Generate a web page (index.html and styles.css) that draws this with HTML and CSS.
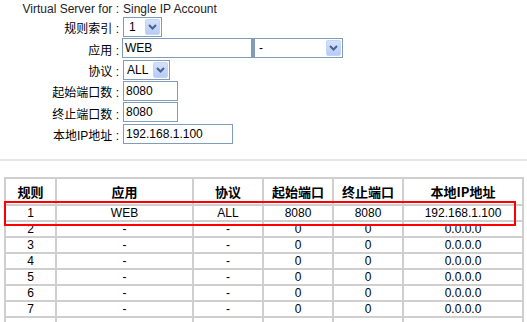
FILE: index.html
```html
<!DOCTYPE html>
<html lang="zh-CN">
  <head>
    <meta charset="UTF-8" />
    <title>Virtual Server</title>
    <link rel="stylesheet" href="styles.css">
  </head>
  <body>
    <div class="form">
      <div class="lbl">Virtual Server for :</div>
      <div class="val">Single IP Account</div>

      <div class="lbl">规则索引 :</div>
      <div class="val">
        <div class="sel sel-idx"><span>1</span><i class="arrow"><svg width="11" height="8" viewBox="0 0 11 8"><polyline points="2,2 5.5,5.5 9,2" fill="none" stroke="#4d6185" stroke-width="2"/></svg></i></div>
      </div>

      <div class="lbl">应用 :</div>
      <div class="val">
        <div class="box box-app">WEB</div><div class="sel sel-app"><span>-</span><i class="arrow"><svg width="11" height="8" viewBox="0 0 11 8"><polyline points="2,2 5.5,5.5 9,2" fill="none" stroke="#4d6185" stroke-width="2"/></svg></i></div>
      </div>

      <div class="lbl">协议 :</div>
      <div class="val">
        <div class="sel sel-proto"><span>ALL</span><i class="arrow"><svg width="11" height="8" viewBox="0 0 11 8"><polyline points="2,2 5.5,5.5 9,2" fill="none" stroke="#4d6185" stroke-width="2"/></svg></i></div>
      </div>

      <div class="lbl">起始端口数 :</div>
      <div class="val"><div class="box box-port">8080</div></div>

      <div class="lbl">终止端口数 :</div>
      <div class="val"><div class="box box-port">8080</div></div>

      <div class="lbl">本地IP地址 :</div>
      <div class="val"><div class="box box-ip">192.168.1.100</div></div>
    </div>

    <div class="sep"></div>

    <div class="list">
      <table class="rules">
        <tr>
          <th class="c1">规则</th><th class="c2">应用</th><th class="c3">协议</th>
          <th class="c4">起始端口</th><th class="c5">终止端口</th><th class="c6">本地IP地址</th>
        </tr>
        <tr><td>1</td><td>WEB</td><td>ALL</td><td>8080</td><td>8080</td><td>192.168.1.100</td></tr>
        <tr><td>2</td><td>-</td><td>-</td><td>0</td><td>0</td><td>0.0.0.0</td></tr>
        <tr><td>3</td><td>-</td><td>-</td><td>0</td><td>0</td><td>0.0.0.0</td></tr>
        <tr><td>4</td><td>-</td><td>-</td><td>0</td><td>0</td><td>0.0.0.0</td></tr>
        <tr><td>5</td><td>-</td><td>-</td><td>0</td><td>0</td><td>0.0.0.0</td></tr>
        <tr><td>6</td><td>-</td><td>-</td><td>0</td><td>0</td><td>0.0.0.0</td></tr>
        <tr><td>7</td><td>-</td><td>-</td><td>0</td><td>0</td><td>0.0.0.0</td></tr>
        <tr><td></td><td></td><td></td><td></td><td></td><td></td></tr>
      </table>
      <!-- red mark round the first rule -->
      <div class="mark"></div>
    </div>
  </body>
</html>
```

FILE: styles.css
```css
body {
  margin: 0;
  font-family: "Liberation Sans", Arial, "Noto Sans CJK SC", sans-serif;
  font-size: 12px;
  color: #000;
  overflow: hidden;
}

/* Settings form */
.form {
  display: grid;
  grid-template-columns: 119px auto;
  grid-template-rows: 17px 21px 22px 21px 21px 22px 20px;
  column-gap: 4px;
}

.lbl {
  text-align: right;
  display: flex;
  align-items: center;
  justify-content: flex-end;
  white-space: nowrap;
}

.val {
  display: flex;
  align-items: flex-start;
  white-space: nowrap;
}

.form .lbl:first-child,
.form .lbl:first-child + .val {
  align-items: center;
  color: #222;
}

/* text boxes */
.box {
  box-sizing: border-box;
  height: 20px;
  border: 1px solid #7f9db9;
  padding: 0 2px;
  line-height: 18px;
  background: #fff;
}

.box-app {
  width: 131px;
  margin-left: -1px;
  border-right-width: 2px;
}

.box-port {
  width: 55px;
}

.box-ip {
  width: 110px;
}

/* drop down lists */
.sel {
  box-sizing: border-box;
  height: 20px;
  border: 1px solid #7f9db9;
  display: flex;
  align-items: center;
  justify-content: space-between;
  padding: 0 1px 0 5px;
  background: #fff;
}

.sel-idx {
  width: 39px;
}

.sel-app {
  width: 90px;
  padding-left: 4px;
  border-left-width: 2px;
}

.sel-proto {
  width: 47px;
  padding-left: 3px;
}

.arrow {
  box-sizing: border-box;
  width: 15px;
  height: 16px;
  border: 1px solid #c4d4f8;
  border-radius: 2px;
  background: linear-gradient(#d3e1fd, #b7cbf6);
  display: flex;
  align-items: center;
  justify-content: center;
}

.sep {
  margin-top: 15px;
  height: 2px;
  background: #e6e6e6;
}

/* Rules list */
.list {
  position: relative;
  margin: 16px 0 0 4px;
}

.rules {
  border-collapse: collapse;
  table-layout: fixed;
  width: 519px;
}

.rules th,
.rules td {
  border: 2px solid #cfcfcf;
  padding: 0;
  text-align: center;
  font-weight: normal;
}

.rules th {
  height: 25px;
  font-family: "Noto Sans CJK SC", sans-serif;
  font-weight: bold;
  font-size: 13px;
}

.rules td {
  height: 14px;
  line-height: 14px;
}

.c1 { width: 49px; }
.c2 { width: 135px; }
.c3 { width: 68px; }
.c4 { width: 68px; }
.c5 { width: 68px; }
.c6 { width: 118px; }

.mark {
  position: absolute;
  left: 0;
  top: 24px;
  width: 508px;
  height: 21px;
  border: 2px solid #f00;
}
```
